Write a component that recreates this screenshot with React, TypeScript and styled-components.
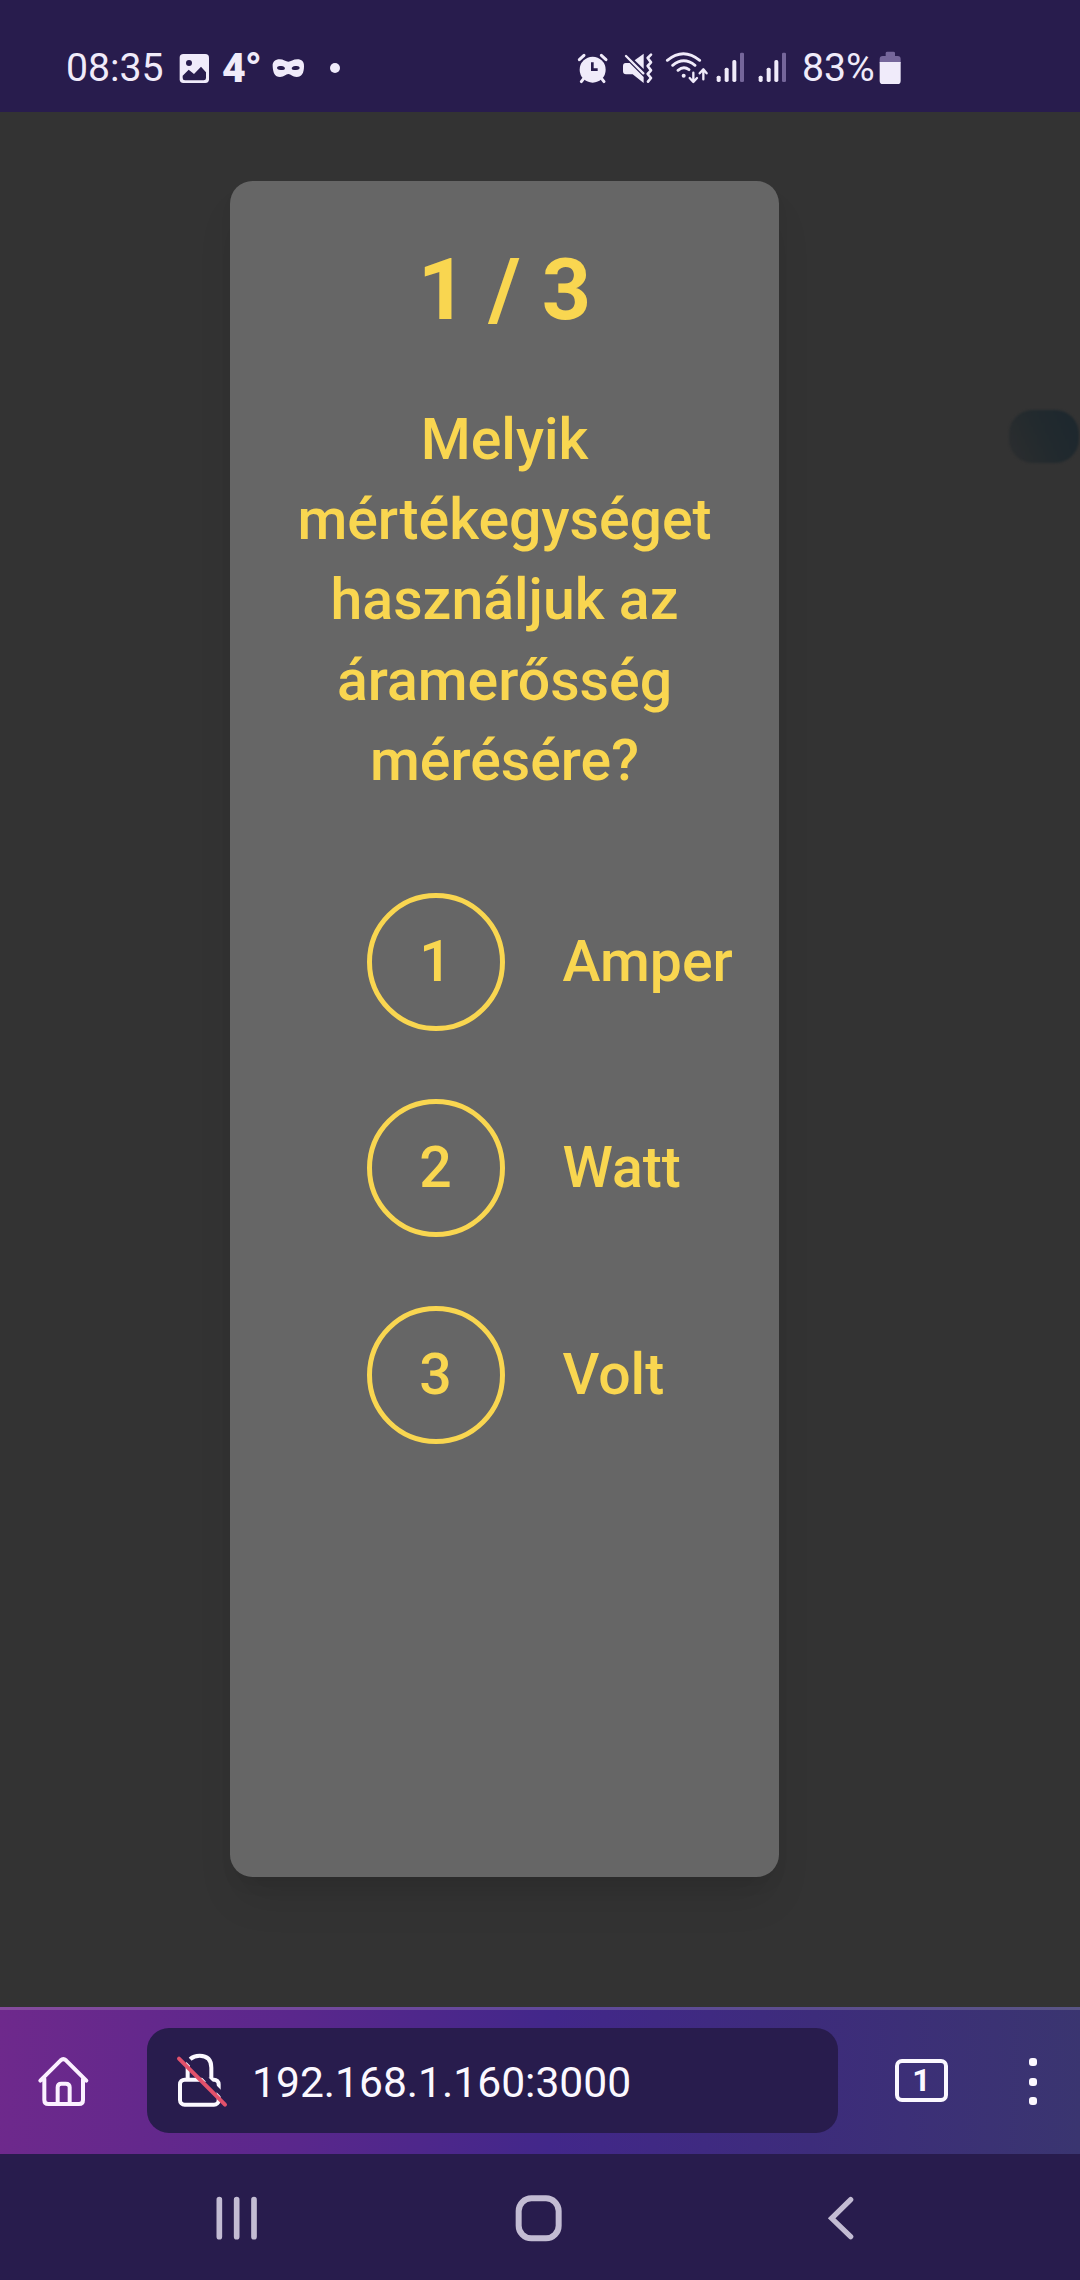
import React from 'react';
import styled, { createGlobalStyle } from 'styled-components';

const YELLOW = '#f9d650';
const INDIGO = '#281c4d';
const LIGHT = '#f0ebfa';

const GlobalStyle = createGlobalStyle`
  *, *::before, *::after { box-sizing: border-box; }
  body {
    margin: 0;
    background: #333;
    font-family: Roboto, "Noto Sans", sans-serif;
  }
  svg { display: block; flex: none; }
`;

const Screen = styled.div`
  position: relative;
  display: flex;
  flex-direction: column;
  width: 1080px;
  height: 2280px;
  overflow: hidden;
  background: #333;
`;

const StatusBar = styled.header`
  display: flex;
  justify-content: space-between;
  align-items: center;
  height: 112px;
  padding: 24px 179px 0 66px;
  background: ${INDIGO};
  color: ${LIGHT};
`;

const StatusGroup = styled.div`
  display: flex;
  align-items: center;
`;

const StatusText = styled.span<{ $width: number }>`
  width: ${(p) => p.$width}px;
  font-size: 39.2px;
  line-height: 44px;
  white-space: nowrap;
`;

const Temperature = styled.span`
  display: flex;
  width: 48px;
  font-size: 41px;
  font-weight: 900;
  line-height: 44px;
`;

const Degree = styled.span`
  margin: 1px 0 -1px -1px;
  font-size: 44px;
  font-weight: 800;
`;

const Page = styled.main`
  display: flex;
  flex: 1;
  align-items: flex-start;
  padding: 69px 0 0 230px;
`;

const Card = styled.section`
  display: flex;
  flex-direction: column;
  width: 549px;
  height: 1696px;
  padding-top: 59px;
  border-radius: 22.5px;
  background: #666;
  color: ${YELLOW};
  box-shadow: 0 28px 42px -8px rgba(0, 0, 0, 0.1), 0 11px 17px -6px rgba(0, 0, 0, 0.08);
`;

const Progress = styled.h1`
  margin: 0;
  font-size: 86px;
  font-weight: 700;
  line-height: 100px;
  text-align: center;
`;

const Question = styled.h2`
  margin: 60px 0 0;
  padding: 0 50px;
  font-size: 57.2px;
  font-weight: 500;
  line-height: 80.2px;
  text-align: center;
`;

const Answers = styled.ol`
  display: flex;
  flex-direction: column;
  gap: 68.5px;
  margin: 91.5px 0 0;
  padding: 0 0 0 136.5px;
  list-style: none;
`;

const Answer = styled.li`
  display: flex;
  align-items: center;
  gap: 58px;
  font-size: 57.2px;
  font-weight: 500;
  line-height: 80px;
`;

const Badge = styled.span`
  display: flex;
  align-items: center;
  justify-content: center;
  width: 138px;
  height: 138px;
  border: 5px solid ${YELLOW};
  border-radius: 50%;
`;

const EdgeHandle = styled.div`
  position: absolute;
  top: 410px;
  right: 1px;
  width: 70px;
  height: 53px;
  border-radius: 24px;
  background: linear-gradient(65deg, #2a2d2f 10%, #222a2e 50%, #1e282e 85%);
  filter: blur(1px);
`;

const BrowserBar = styled.div`
  display: flex;
  align-items: center;
  height: 147px;
  padding-left: 36px;
  border-top: 3px solid rgba(255, 255, 255, 0.16);
  background: linear-gradient(92deg, #6e298c 0%, #5a278c 27%, #42278a 51%, #3d2c7b 75%, #3a3570 100%) border-box;
  color: #fbf8ff;
`;

const AddressField = styled.div`
  display: flex;
  align-items: center;
  gap: 19px;
  width: 691px;
  height: 105px;
  margin: 0 51px 3px 56px;
  padding-left: 26px;
  border-radius: 22px;
  background: ${INDIGO};
  font-size: 42.6px;
`;

const Address = styled.span`
  padding-top: 2px;
`;

const TabCount = styled.span`
  display: flex;
  align-items: center;
  justify-content: center;
  width: 53px;
  height: 43px;
  margin: 0 81px 4px 6px;
  border: 4px solid currentColor;
  border-radius: 7px;
  font-size: 32px;
  font-weight: 700;
  line-height: 35px;
`;

const MenuDots = styled.div`
  display: flex;
  flex-direction: column;
  gap: 11.5px;
  margin-bottom: 1px;
`;

const Dot = styled.i`
  width: 8px;
  height: 8px;
  border-radius: 3px;
  background: currentColor;
`;

const SystemNav = styled.nav`
  display: flex;
  align-items: center;
  height: 126px;
  padding: 2px 0 0 212px;
  background: ${INDIGO};
`;

interface IconProps {
  width: number;
  height?: number;
  left?: number;
  children: React.ReactNode;
}

/* Icons are drawn on a grid of three units to the pixel. */
const Icon = ({ width, height = 36, left = 0, children }: IconProps) => (
  <svg
    width={width}
    height={height}
    viewBox={`${left} 0 ${width * 3} ${height * 3}`}
    fill="none"
    strokeLinecap="round"
    strokeLinejoin="round"
  >
    {children}
  </svg>
);

const GalleryIcon = () => (
  <Icon width={43} left={417}>
    <rect x="419" y="12" width="88" height="87" rx="11" fill={LIGHT} />
    <circle cx="447" cy="39" r="9" fill={INDIGO} />
    <path d="M428 77V84Q428 91 435 91H491Q498 91 498 84V67L483 50L462 72L446 59Z" fill={INDIGO} />
  </Icon>
);

const MaskIcon = () => (
  <Icon width={56} left={690}>
    <path
      d="M698 49C697 35 706 28 719 28C730 28 738 35 745 35C752 35 760 28 772 28C785 28 793 35 792 49C792 68 786 81 770 81C757 81 753 72 745 72C737 72 733 81 720 81C704 81 699 68 698 49Z"
      fill={LIGHT}
    />
    <ellipse cx="723" cy="54" rx="12" ry="6" fill={INDIGO} transform="rotate(8 723 54)" />
    <ellipse cx="767" cy="54" rx="12" ry="6" fill={INDIGO} transform="rotate(-8 767 54)" />
  </Icon>
);

const AlarmIcon = () => (
  <Icon width={44} left={51}>
    <circle cx="98" cy="59" r="39" fill={LIGHT} />
    <path d="M58 29L72 16M138 29L124 16M71 86L64 95M125 86L132 95" stroke={LIGHT} strokeWidth="9" />
    <path d="M97 37V59H113" stroke={INDIGO} strokeWidth="8" strokeLinejoin="miter" strokeLinecap="butt" />
  </Icon>
);

const MuteVibrateIcon = () => (
  <Icon width={43} left={183}>
    <path d="M189 48Q189 39 197 39H209L251 81V99L218 73H198Q189 73 189 64Z" fill={LIGHT} />
    <path d="M224 31L251 11V57Z" fill={LIGHT} />
    <path d="M198 18L250 70" stroke={LIGHT} strokeWidth="7" />
    <path d="M273 14L263 24L273 37L263 48L273 61L263 72L273 84L264 95" stroke={LIGHT} strokeWidth="8" />
  </Icon>
);

const WifiIcon = () => (
  <Icon width={46} left={312}>
    <g stroke={LIGHT} strokeWidth="8.5">
      <path d="M322 31Q370-9 419 31M338 46Q371 19 405 46M354 61Q371 47 387 59" />
      <path d="M400 68V95M389 84L400 96L411 84M430 88V60M419 70L430 58L440 70" strokeWidth="7" />
    </g>
    <circle cx="371" cy="77" r="6" fill={LIGHT} />
  </Icon>
);

const SignalIcon = ({ width }: { width: number }) => (
  <Icon width={width}>
    <rect x="20" y="77" width="12" height="19" rx="5" fill={LIGHT} />
    <rect x="44" y="53" width="12" height="43" rx="5" fill={LIGHT} />
    <rect x="67" y="30" width="12" height="66" rx="5" fill={LIGHT} />
    <rect x="90" y="8" width="12" height="88" rx="4" fill="#75669a" />
  </Icon>
);

const BatteryIcon = () => (
  <Icon width={22} left={958}>
    <path d="M960 40V27Q960 18 969 18H978V9Q978 5 983 5H1001Q1006 5 1006 9V18H1014Q1023 18 1023 27V40Z" fill="#75669a" />
    <path d="M960 36H1023V92Q1023 102 1014 102H969Q960 102 960 92Z" fill={LIGHT} />
  </Icon>
);

const HomeIcon = () => (
  <Icon width={55} height={60} left={108}>
    <g stroke="#fbf0ff" strokeWidth="12">
      <path d="M121 86L182 25Q190 18 198 25L259 86M133 80V144Q133 156 145 156H237Q249 156 249 144V80" />
      <path d="M173 156V106Q173 95 184 95H197Q209 95 209 106V156" />
    </g>
  </Icon>
);

const InsecureIcon = () => (
  <Icon width={60} height={60} left={520}>
    <g stroke="#fbf8ff" strokeWidth="12">
      <path d="M564 86V50Q564 14 600 14Q635 14 635 50V86" strokeLinecap="butt" />
      <rect x="541" y="86" width="116" height="75" rx="14" />
    </g>
    <path d="M548 11L690 153" stroke={INDIGO} strokeWidth="14" strokeLinecap="butt" />
    <path d="M538 23L676 161" stroke="#e2516b" strokeWidth="12" />
  </Icon>
);

const RecentsIcon = () => (
  <Icon width={298} height={54} left={636}>
    <path d="M658 26V137M710 26V137M762 26V137" stroke="#c3bcd3" strokeWidth="17" />
  </Icon>
);

const HomeButtonIcon = () => (
  <Icon width={310} height={54} left={330}>
    <rect x="356" y="22" width="120" height="120" rx="38" stroke="#c3bcd3" strokeWidth="18" />
  </Icon>
);

const BackIcon = () => (
  <Icon width={40} height={54} left={120}>
    <path d="M212 26L155 82L212 137" stroke="#c3bcd3" strokeWidth="16" strokeLinejoin="miter" />
  </Icon>
);

const ANSWERS = ['Amper', 'Watt', 'Volt'];

export default function App() {
  return (
    <>
      <GlobalStyle />
      <Screen>
        <StatusBar>
          <StatusGroup>
            <StatusText $width={113}>08:35</StatusText>
            <GalleryIcon />
            <Temperature>
              4<Degree>°</Degree>
            </Temperature>
            <MaskIcon />
            <Icon width={20} left={858}>
              <circle cx="885" cy="54" r="15" fill={LIGHT} />
            </Icon>
          </StatusGroup>
          <StatusGroup>
            <AlarmIcon />
            <MuteVibrateIcon />
            <WifiIcon />
            <SignalIcon width={42} />
            <SignalIcon width={50} />
            <StatusText $width={77}>83%</StatusText>
            <BatteryIcon />
          </StatusGroup>
        </StatusBar>

        <Page>
          <Card>
            <Progress>1 / 3</Progress>
            <Question>Melyik mértékegységet használjuk az áramerősség mérésére?</Question>
            <Answers>
              {ANSWERS.map((label, i) => (
                <Answer key={label}>
                  <Badge>{i + 1}</Badge>
                  <span>{label}</span>
                </Answer>
              ))}
            </Answers>
          </Card>
        </Page>
        <EdgeHandle />

        <BrowserBar>
          <HomeIcon />
          <AddressField>
            <InsecureIcon />
            <Address>192.168.1.160:3000</Address>
          </AddressField>
          <TabCount>1</TabCount>
          <MenuDots>
            <Dot />
            <Dot />
            <Dot />
          </MenuDots>
        </BrowserBar>

        <SystemNav>
          <RecentsIcon />
          <HomeButtonIcon />
          <BackIcon />
        </SystemNav>
      </Screen>
    </>
  );
}
